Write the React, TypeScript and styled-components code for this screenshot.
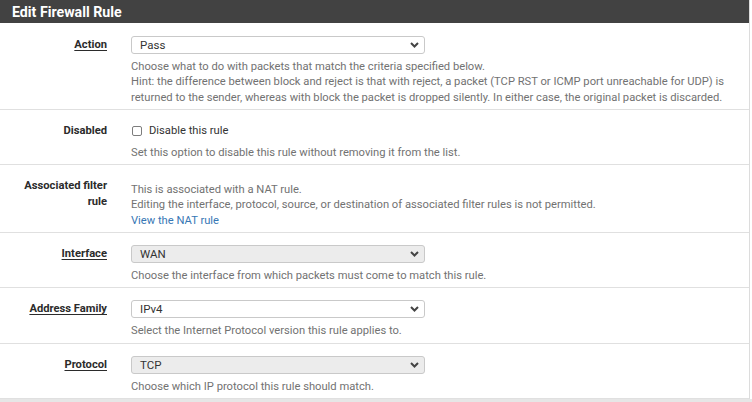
import React from "react";
import styled, { createGlobalStyle } from "styled-components";

const GlobalStyle = createGlobalStyle`
  html, body { margin: 0; padding: 0; background: #ffffff; }
  body { font-family: Roboto, "Liberation Sans", Arial, sans-serif; }
  * { box-sizing: border-box; }
`;

const Panel = styled.div`
  width: 750px;
  border-right: 1px solid #dcdcdc;
  background: #ffffff;
`;

const Heading = styled.div`
  height: 23px;
  background: #424242;
  color: #ffffff;
  font-size: 14.2px;
  font-weight: 700;
  padding-left: 12px;
  display: flex;
  align-items: center;
`;

const Body = styled.div`
  padding-top: 1px;
`;

const Row = styled.div`
  display: grid;
  grid-template-columns: 107px 1fr;
  column-gap: 24px;
  padding: 12px 0 4px;
  border-bottom: 1px solid #e0e0e0;
`;

const Label = styled.div<{ $required?: boolean }>`
  padding-left: 14px;
  text-align: right;
  font-size: 11.2px;
  font-weight: 700;
  line-height: 16px;
  color: #2b2b2b;
  padding-top: 1px;
  span {
    text-decoration: ${(p) => (p.$required ? "underline" : "none")};
    text-underline-offset: 2px;
  }
`;

const Control = styled.div`
  display: flex;
  flex-direction: column;
  align-items: flex-start;
`;

const Select = styled.div<{ $disabled?: boolean }>`
  width: 294px;
  height: 18px;
  border: 1px solid #c9c9c9;
  border-radius: 3px;
  background: ${(p) => (p.$disabled ? "#ececec" : "#ffffff")};
  padding: 0 5px 0 8px;
  display: flex;
  align-items: center;
  justify-content: space-between;
  font-size: 11.5px;
  color: #333333;
`;

const Help = styled.div`
  margin-top: 5px;
  font-size: 11.2px;
  line-height: 15.3px;
  color: #727272;
`;

const Link = styled.a`
  color: #3777b5;
  text-decoration: none;
`;

const CheckLine = styled.label`
  height: 18px;
  display: flex;
  align-items: center;
  gap: 7px;
  font-size: 11.2px;
  color: #333333;
  padding-left: 1px;
`;

const CheckBox = styled.span`
  width: 10px;
  height: 10px;
  border: 1px solid #7d7d7d;
  border-radius: 2px;
  background: #ffffff;
`;

const BottomBand = styled.div`
  height: 4px;
  background: #e6e6e6;
`;

const Chevron = () => (
  <svg width="9" height="6" viewBox="0 0 9 6">
    <polyline points="1,1 4.5,4.5 8,1" fill="none" stroke="#444" strokeWidth="2" />
  </svg>
);

const SelectBox: React.FC<{ value: string; disabled?: boolean }> = ({ value, disabled }) => (
  <Select $disabled={disabled}>
    <span>{value}</span>
    <Chevron />
  </Select>
);

export default function App() {
  return (
    <>
      <GlobalStyle />
      <Panel>
        <Heading>Edit Firewall Rule</Heading>
        <Body>
          <Row>
            <Label $required><span>Action</span></Label>
            <Control>
              <SelectBox value="Pass" />
              <Help>
                Choose what to do with packets that match the criteria specified below.
                <br />
                Hint: the difference between block and reject is that with reject, a packet (TCP RST or ICMP port unreachable for UDP) is returned to the sender, whereas with block the packet is dropped silently. In either case, the original packet is discarded.
              </Help>
            </Control>
          </Row>
          <Row>
            <Label><span>Disabled</span></Label>
            <Control>
              <CheckLine>
                <CheckBox />
                Disable this rule
              </CheckLine>
              <Help>Set this option to disable this rule without removing it from the list.</Help>
            </Control>
          </Row>
          <Row>
            <Label><span>Associated filter rule</span></Label>
            <Control>
              <Help>
                This is associated with a NAT rule.
                <br />
                Editing the interface, protocol, source, or destination of associated filter rules is not permitted.
                <br />
                <Link href="#">View the NAT rule</Link>
              </Help>
            </Control>
          </Row>
          <Row>
            <Label $required><span>Interface</span></Label>
            <Control>
              <SelectBox value="WAN" disabled />
              <Help>Choose the interface from which packets must come to match this rule.</Help>
            </Control>
          </Row>
          <Row>
            <Label $required><span>Address Family</span></Label>
            <Control>
              <SelectBox value="IPv4" />
              <Help>Select the Internet Protocol version this rule applies to.</Help>
            </Control>
          </Row>
          <Row>
            <Label $required><span>Protocol</span></Label>
            <Control>
              <SelectBox value="TCP" disabled />
              <Help>Choose which IP protocol this rule should match.</Help>
            </Control>
          </Row>
        </Body>
      </Panel>
      <BottomBand />
    </>
  );
}
